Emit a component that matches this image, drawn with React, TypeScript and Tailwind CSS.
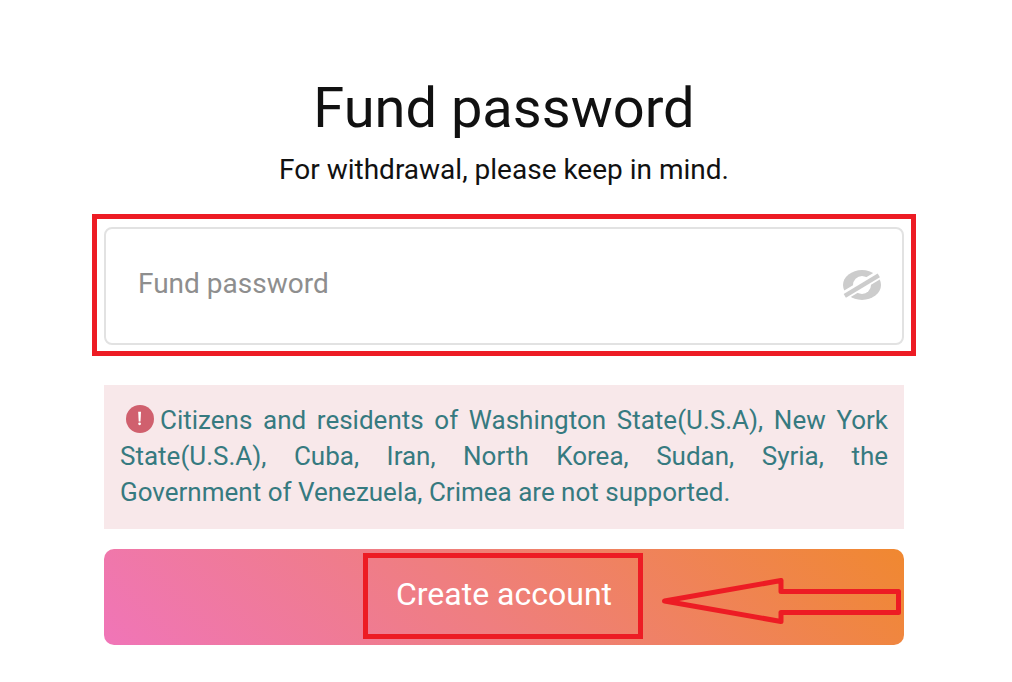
import { useState } from "react";

function HiddenEyeIcon() {
  return (
    <svg viewBox="0 0 38 32" className="block h-8 w-[38px]" aria-hidden="true">
      <ellipse cx="19" cy="16" rx="19" ry="15" fill="#cccccc" />
      <circle cx="19" cy="16" r="9" fill="#ffffff" />
      <path d="M-2 28.6 40 3.4" stroke="#ffffff" strokeWidth="9" />
      <path d="M1.8 26.8 35.8 6.4" stroke="#cccccc" strokeWidth="4.4" />
    </svg>
  );
}

function WarningIcon() {
  return (
    <svg
      viewBox="0 0 28 28"
      className="mx-1.5 inline-block h-7 w-7 -translate-y-0.5 align-[-6px]"
      aria-hidden="true"
    >
      <circle cx="14" cy="14" r="14" fill="#d0606e" />
      <path d="M12.2 6.800h2.800l-.5 9.800h-1.800z" fill="#ffffff" />
      <circle cx="13.6" cy="18.800" r="1.4" fill="#ffffff" />
    </svg>
  );
}

function Arrow() {
  return (
    <svg
      viewBox="0 0 240 46"
      className="pointer-events-none absolute top-[29px] right-[3px] h-[46px] w-[240px]"
      fill="none"
      stroke="#ed1c24"
      strokeWidth="5"
      strokeLinejoin="round"
      aria-hidden="true"
    >
      <path d="M3.5 23 120 2.5V13.5H237.500V34.5H120V43.500Z" />
    </svg>
  );
}

export default function App() {
  const [visible, setVisible] = useState(false);

  return (
    <main className="min-h-screen bg-white pt-[76px] pr-[108px] pb-9 pl-[104px] font-['Roboto',sans-serif] text-[#111111]">
      <header className="text-center">
        <h1 className="text-[56px] leading-16">Fund password</h1>
        <p className="mt-2.5 text-[28px] leading-10">For withdrawal, please keep in mind.</p>
      </header>

      <form onSubmit={(event) => event.preventDefault()}>
        <div className="relative mt-[37px] flex h-[118px] items-center rounded-lg border-2 border-[#e2e2e2] pr-[21px] pb-0.5 pl-8">
          <input
            type={visible ? "text" : "password"}
            aria-label="Fund password"
            placeholder="Fund password"
            className="h-full min-w-0 flex-1 pb-1 text-[28px] outline-none placeholder:text-[#8e8e8e]"
          />
          <button type="button" aria-label="Show password" onClick={() => setVisible(!visible)}>
            <HiddenEyeIcon />
          </button>
          <div className="pointer-events-none absolute -inset-x-3.5 -top-[15px] -bottom-[13px] border-5 border-[#ed1c24]" />
        </div>

        <p className="mt-10 bg-[#f8e8ea] px-4 pt-[17px] pb-[19px] text-justify text-[26px] leading-9 text-[#367a80]">
          <WarningIcon />
          Citizens and residents of Washington State(U.S.A), New York State(U.S.A), Cuba, Iran, North
          Korea, Sudan, Syria, the Government of Venezuela, Crimea are not supported.
        </p>

        <div className="relative mt-5">
          <button
            type="submit"
            className="flex h-24 w-full items-center justify-center rounded-[10px] bg-[linear-gradient(45deg,#f075b8,#ef7e80_45%,#f08830)] pb-1.5 text-[32px] text-white"
          >
            Create account
          </button>
          <div className="pointer-events-none absolute top-1 left-1/2 h-[86px] w-[280px] -translate-x-[141px] border-5 border-[#ed1c24]" />
          <Arrow />
        </div>
      </form>
    </main>
  );
}
